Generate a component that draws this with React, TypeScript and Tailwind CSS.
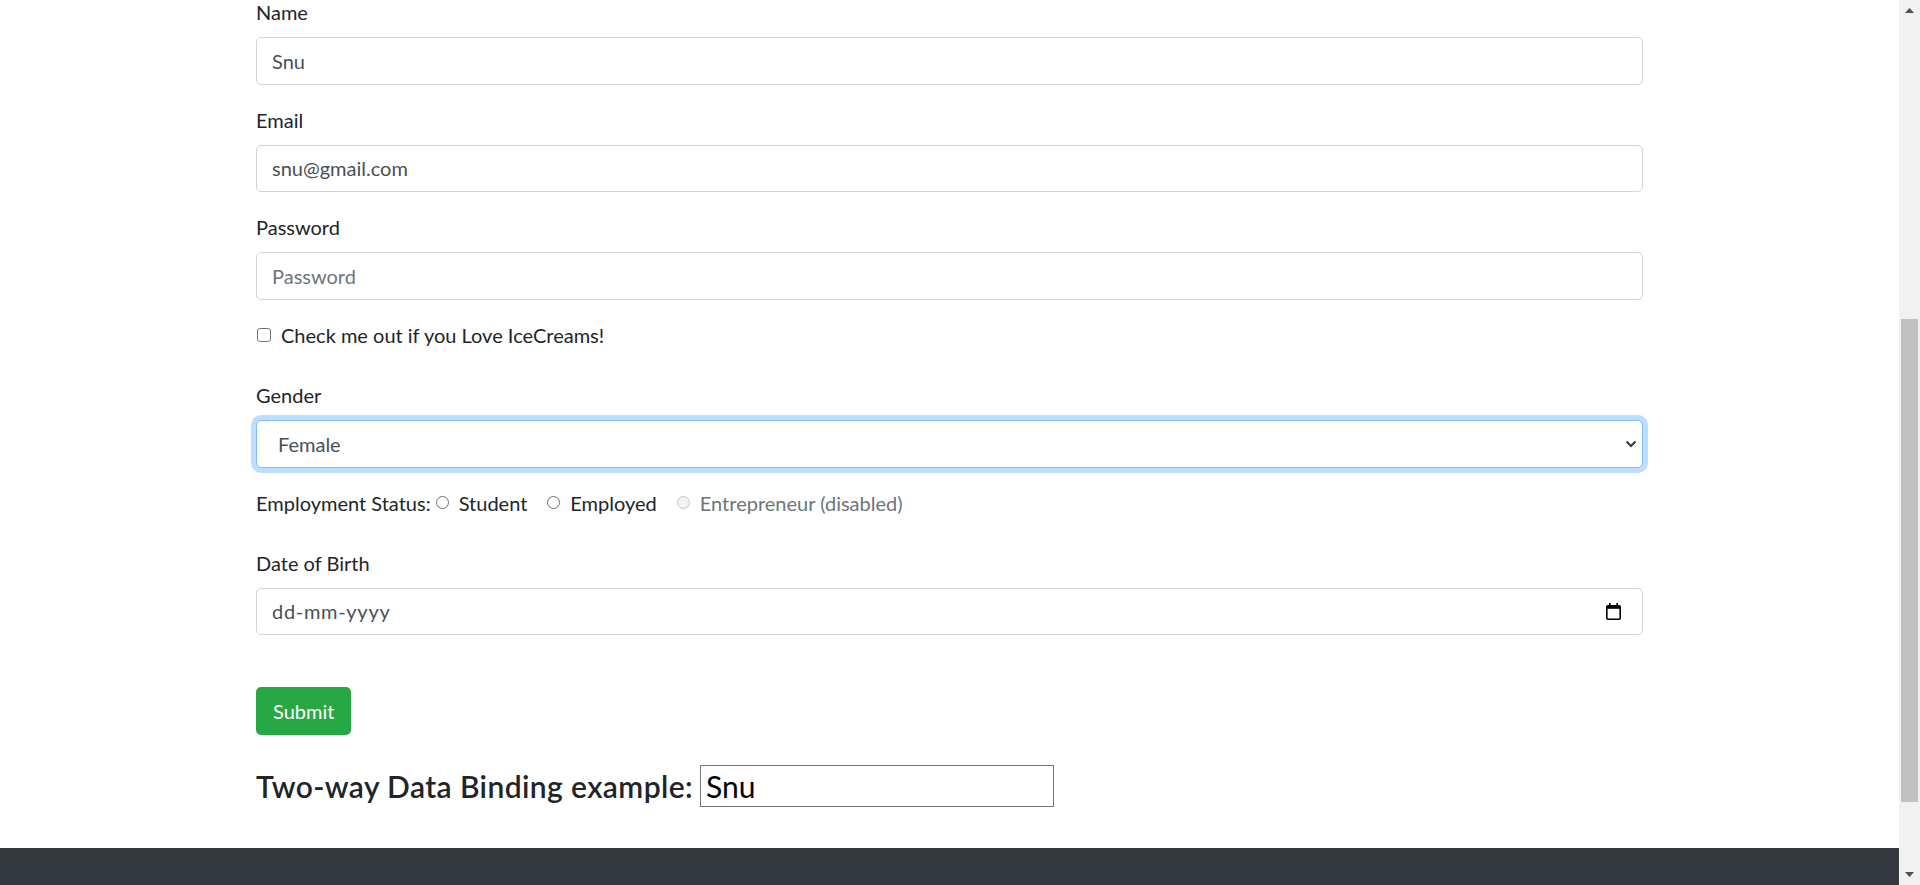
import { useState } from 'react';

const labelCls = 'block text-[20px] leading-[30px] text-[#212529] mb-[10px]';
const inputCls =
  'block w-full h-[47.5px] px-[15px] border border-[#ced4da] rounded-[5px] bg-white text-[20px] text-[#495057] placeholder:text-[#6c757d] outline-none';

const CalendarIcon = () => (
  <svg width="15" height="17" viewBox="0 0 15 17" fill="none">
    <rect x="3" y="0" width="1.6" height="3.5" fill="#000" />
    <rect x="10.4" y="0" width="1.6" height="3.5" fill="#000" />
    <rect x="0.8" y="2.8" width="13.4" height="13.4" rx="1.2" stroke="#000" strokeWidth="1.6" />
    <rect x="0.8" y="2.8" width="13.4" height="3" fill="#000" />
  </svg>
);

const Radio = ({ label, disabled }: { label: string; disabled?: boolean }) => (
  <label className="flex items-center">
    <input
      type="radio"
      name="employment"
      disabled={disabled}
      className={`appearance-none w-[13px] h-[13px] rounded-full border ${
        disabled ? 'border-[#c5c5c5] bg-[#f3f3f3]' : 'border-[#6e6e6e] bg-white'
      }`}
    />
    <span className={`ml-[10px] ${disabled ? 'text-[#6c757d]' : 'text-[#212529]'}`}>{label}</span>
  </label>
);

export default function App() {
  const [name, setName] = useState('Snu');
  const [email, setEmail] = useState('snu@gmail.com');
  const [gender, setGender] = useState('Female');

  return (
    <div className="flex h-[885px] overflow-hidden bg-white font-['Lato',sans-serif]">
      <div className="flex-1 min-w-0 flex flex-col">
        <main className="flex-1 overflow-hidden">
          <form className="w-[1387px] mx-auto -mt-[3px]" onSubmit={(e) => e.preventDefault()}>
            {/* Name */}
            <div className="mb-[20px]">
              <label className={labelCls}>Name</label>
              <input className={inputCls} value={name} onChange={(e) => setName(e.target.value)} />
            </div>

            {/* Email */}
            <div className="mb-[20px]">
              <label className={labelCls}>Email</label>
              <input className={inputCls} value={email} onChange={(e) => setEmail(e.target.value)} />
            </div>

            {/* Password */}
            <div className="mb-[20px]">
              <label className={labelCls}>Password</label>
              <input type="password" className={inputCls} placeholder="Password" />
            </div>

            {/* Checkbox */}
            <label className="flex items-center h-[30px] mb-[30.5px] text-[20px] text-[#212529]">
              <input
                type="checkbox"
                className="appearance-none w-[14px] h-[14px] ml-[1px] border border-[#767676] rounded-[3px] bg-white"
              />
              <span className="ml-[10px]">Check me out if you Love IceCreams!</span>
            </label>

            {/* Gender */}
            <div className="mb-[20px]">
              <label className={labelCls}>Gender</label>
              <div className="relative">
                <select
                  value={gender}
                  onChange={(e) => setGender(e.target.value)}
                  className="block w-full h-[47.5px] pl-[21px] pr-[40px] appearance-none border border-[#80bdff] rounded-[5px] bg-white text-[20px] text-[#495057] shadow-[0_0_0_5px_rgba(0,123,255,0.25)] outline-none"
                >
                  <option>Male</option>
                  <option>Female</option>
                  <option>Other</option>
                </select>
                <svg
                  className="absolute right-[6px] top-[20px] pointer-events-none"
                  width="12"
                  height="8"
                  viewBox="0 0 12 8"
                  fill="none"
                >
                  <path d="M1.5 1.5 6 6l4.5-4.5" stroke="#343a40" strokeWidth="2" />
                </svg>
              </div>
            </div>

            {/* Employment */}
            <div className="flex items-center h-[30px] mb-[30px] text-[20px]">
              <span className="text-[#212529] mr-[5px]">Employment Status:</span>
              <Radio label="Student" />
              <div className="w-[20px]" />
              <Radio label="Employed" />
              <div className="w-[20px]" />
              <Radio label="Entrepreneur (disabled)" disabled />
            </div>

            {/* Date of Birth */}
            <div>
              <label className={labelCls}>Date of Birth</label>
              <div className="relative">
                <input className={`${inputCls} tracking-[0.7px]`} readOnly value="dd-mm-yyyy" />
                <span className="absolute right-[22px] top-[15px] pointer-events-none">
                  <CalendarIcon />
                </span>
              </div>
            </div>

            <button
              type="submit"
              className="mt-[52px] h-[47.5px] px-[17px] rounded-[5px] bg-[#28a745] text-white text-[20px]"
            >
              Submit
            </button>

            {/* Two-way binding */}
            <div className="flex items-center mt-[30.5px] h-[42px]">
              <h4 className="text-[30px] font-semibold text-[#212529] leading-[36px] tracking-[0.4px]">
                Two-way Data Binding example:
              </h4>
              <input
                className="ml-[7px] w-[354px] h-[42px] px-[5px] border border-[#767676] text-[30px] text-black outline-none"
                value={name}
                onChange={(e) => setName(e.target.value)}
              />
            </div>
          </form>
        </main>
        <footer className="h-[37px] bg-[#343a40]" />
      </div>

      {/* scrollbar */}
      <div className="w-[21px] bg-[#f1f1f1] flex flex-col">
        <div className="h-[21px] flex items-center justify-center">
          <svg width="9" height="5" viewBox="0 0 9 5">
            <path d="M4.5 0 9 5H0z" fill="#505050" />
          </svg>
        </div>
        <div className="h-[298px]" />
        <div className="h-[483px] ml-[2px] w-[17px] bg-[#c1c1c1]" />
        <div className="flex-1" />
        <div className="h-[21px] flex items-center justify-center">
          <svg width="9" height="5" viewBox="0 0 9 5">
            <path d="M0 0h9L4.5 5z" fill="#505050" />
          </svg>
        </div>
      </div>
    </div>
  );
}
